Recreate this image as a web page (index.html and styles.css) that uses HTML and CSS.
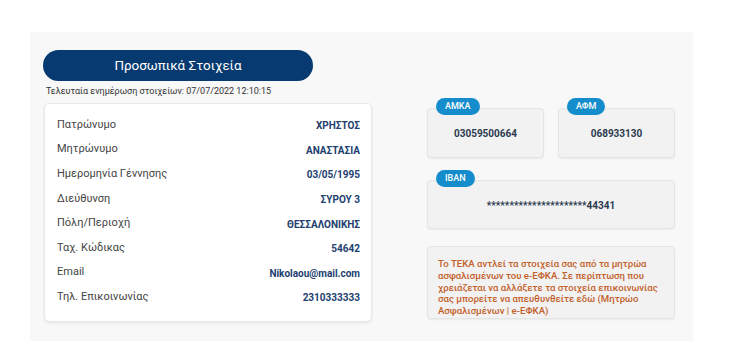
FILE: index.html
```html
<!DOCTYPE html>
<html lang="el">
<head>
<meta charset="utf-8">
<link rel="stylesheet" href="styles.css">
</head>
<body>
<div class="panel">
  <div class="left">
    <div class="title">Προσωπικά Στοιχεία</div>
    <div class="updated">Τελευταία ενημέρωση στοιχείων: 07/07/2022 12:10:15</div>
    <div class="card">
      <div class="row"><span class="lbl">Πατρώνυμο</span><span class="val">ΧΡΗΣΤΟΣ</span></div>
      <div class="row"><span class="lbl">Μητρώνυμο</span><span class="val">ΑΝΑΣΤΑΣΙΑ</span></div>
      <div class="row"><span class="lbl">Ημερομηνία Γέννησης</span><span class="val">03/05/1995</span></div>
      <div class="row"><span class="lbl">Διεύθυνση</span><span class="val">ΣΥΡΟΥ 3</span></div>
      <div class="row"><span class="lbl">Πόλη/Περιοχή</span><span class="val">ΘΕΣΣΑΛΟΝΙΚΗΣ</span></div>
      <div class="row"><span class="lbl">Ταχ. Κώδικας</span><span class="val">54642</span></div>
      <div class="row"><span class="lbl">Email</span><span class="val">Nikolaou@mail.com</span></div>
      <div class="row"><span class="lbl">Τηλ. Επικοινωνίας</span><span class="val">2310333333</span></div>
    </div>
  </div>
  <div class="right">
    <div class="pair">
      <div class="box small"><span class="badge">ΑΜΚΑ</span><span class="num">03059500664</span></div>
      <div class="box small"><span class="badge">ΑΦΜ</span><span class="num">068933130</span></div>
    </div>
    <div class="box wide"><span class="badge">IBAN</span><span class="num">**********************44341</span></div>
    <div class="info">Το ΤΕΚΑ αντλεί τα στοιχεία σας από τα μητρώα ασφαλισμένων του e-ΕΦΚΑ. Σε περίπτωση που χρειάζεται να αλλάξετε τα στοιχεία επικοινωνίας σας μπορείτε να απευθυνθείτε εδώ (Μητρώο Ασφαλισμένων | e-ΕΦΚΑ)</div>
  </div>
</div>
</body>
</html>
```
FILE: styles.css
```css
* { box-sizing: border-box; }
body {
  margin: 0;
  background: #ffffff;
  font-family: Roboto, "Noto Sans", sans-serif;
}
.panel {
  margin: 32px 0 0 30px;
  width: 663px;
  height: 309px;
  background: #f8f8f8;
  display: flex;
  padding: 18px 0 0 13px;
  gap: 55px;
}
.left { width: 329px; display: flex; flex-direction: column; }
.title {
  width: 270px;
  height: 31px;
  border-radius: 16px;
  background: #073a70;
  color: #fff;
  font-size: 13.4px;
  display: flex;
  align-items: center;
  justify-content: center;
}
.updated {
  font-size: 9px;
  color: #333;
  margin: 4px 0 0 3px;
  height: 18px;
  line-height: 12px;
}
.card {
  margin-left: 1px;
  width: 328px;
  height: 219px;
  background: #fff;
  border: 1px solid #e8e8e8;
  border-radius: 5px;
  box-shadow: 0 1px 3px rgba(0,0,0,0.08);
  padding: 8px 11px 0 12px;
}
.row {
  height: 24.6px;
  display: flex;
  justify-content: space-between;
  align-items: center;
}
.lbl { font-size: 11px; color: #444; }
.val { font-size: 10px; font-weight: 700; color: #22406f; padding-top: 3px; }
.right {
  width: 248px;
  padding-top: 58px;
  display: flex;
  flex-direction: column;
}
.pair { display: flex; gap: 14px; }
.box {
  position: relative;
  background: #f2f2f2;
  border: 1px solid #e4e4e4;
  border-radius: 4px;
  box-shadow: 0 1px 2px rgba(0,0,0,0.06);
  display: flex;
  align-items: center;
  justify-content: center;
}
.small { width: 117px; height: 50px; }
.wide { width: 248px; height: 49px; margin-top: 22px; }
.num { font-size: 10px; font-weight: 700; color: #2c3a50; padding-top: 1px; }
.badge {
  position: absolute;
  left: 8px;
  top: -11px;
  height: 17px;
  padding: 0 9px;
  border-radius: 9px;
  background: #158ccb;
  color: #fff;
  font-size: 9px;
  font-weight: 500;
  line-height: 17px;
}
.info {
  margin-top: 17px;
  height: 73px;
  background: #f2f2f2;
  border: 1px solid #e4e4e4;
  border-radius: 4px;
  box-shadow: 0 1px 2px rgba(0,0,0,0.06);
  padding: 11px 6px 0 10px;
  font-size: 9.6px;
  line-height: 11.8px;
  color: #c2602a;
  font-weight: 500;
}
```
